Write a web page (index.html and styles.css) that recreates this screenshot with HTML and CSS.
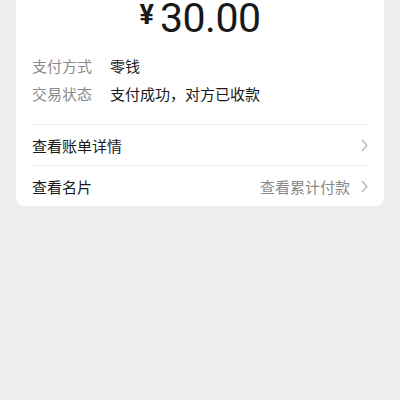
FILE: index.html
```html
<!DOCTYPE html>
<html lang="zh-CN">
<head>
    <meta charset="UTF-8">
    <meta name="viewport" content="width=device-width, initial-scale=1.0">
    <title>交易详情</title>
    <link rel="stylesheet" href="styles.css">
</head>
<body>
    <main class="card">
        <div class="amount">
            <span class="currency">¥</span>
            <span class="value">30.00</span>
        </div>

        <div class="info">
            <div class="info-row">
                <span class="info-label">支付方式</span>
                <span class="info-value">零钱</span>
            </div>
            <div class="info-row">
                <span class="info-label">交易状态</span>
                <span class="info-value">支付成功，对方已收款</span>
            </div>
        </div>

        <a class="link-row" href="#bill">
            <span class="link-title">查看账单详情</span>
            <svg class="chevron" width="7" height="13" viewBox="0 0 7 13">
                <path d="M1 1 L6 6.5 L1 12" fill="none" stroke="#b2b2b2" stroke-width="1.2"/>
            </svg>
        </a>
        <a class="link-row" href="#card">
            <span class="link-title">查看名片</span>
            <span class="link-extra">查看累计付款</span>
            <svg class="chevron" width="7" height="13" viewBox="0 0 7 13">
                <path d="M1 1 L6 6.5 L1 12" fill="none" stroke="#b2b2b2" stroke-width="1.2"/>
            </svg>
        </a>
    </main>
</body>
</html>
```

FILE: styles.css
```css
:root {
    --bg-color: #ededed;
    --card-color: #ffffff;
    --text-color: #191919;
    --muted-color: #8a8a8a;
    --line-color: #ececec;
}

body {
    margin: 0;
    background-color: var(--bg-color);
    color: var(--text-color);
    font-family: "Noto Sans CJK SC", "Noto Sans", sans-serif;
}

.card {
    margin: -20px 16px 0;
    padding: 0 16px;
    background-color: var(--card-color);
    border-radius: 8px;
}

.amount {
    display: flex;
    justify-content: center;
    align-items: flex-start;
    gap: 6px;
    padding-top: 18px;
    height: 62px;
    box-sizing: border-box;
    font-family: Roboto, "DejaVu Sans", sans-serif;
    line-height: 1;
}

.currency {
    margin-top: 4px;
    font-size: 27px;
    font-weight: 700;
}

.value {
    font-size: 41px;
    font-weight: 400;
    letter-spacing: -0.5px;
}

.info {
    padding: 10px 0 16px;
    border-bottom: 1px solid var(--line-color);
}

.info-row {
    display: flex;
    font-size: 15px;
    line-height: 28px;
}

.info-label {
    width: 78px;
    color: var(--muted-color);
}

.link-row {
    display: flex;
    align-items: center;
    height: 40px;
    font-size: 15px;
    color: var(--text-color);
    text-decoration: none;
}

.link-row + .link-row {
    border-top: 1px solid var(--line-color);
}

.link-title {
    flex: 1;
}

.link-extra {
    color: var(--muted-color);
    margin-right: 11px;
}
```
